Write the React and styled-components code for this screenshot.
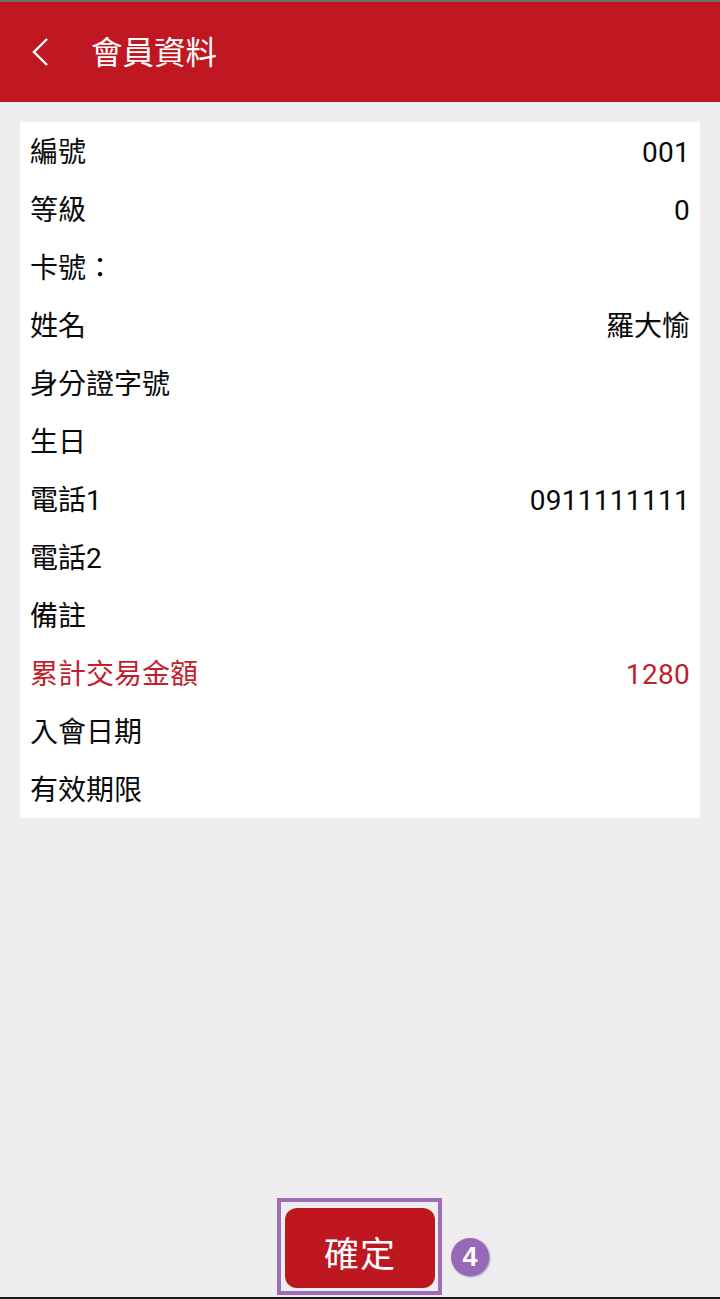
import React from "react";
import styled, { createGlobalStyle } from "styled-components";

const GlobalStyle = createGlobalStyle`
  html, body {
    margin: 0;
    padding: 0;
    background: #eeedf0;
  }
`;

const Page = styled.div`
  display: flex;
  flex-direction: column;
  width: 720px;
  height: 1299px;
  box-sizing: border-box;
  overflow: hidden;
  background: #eeedf0;
  border-top: 2px solid #6f6f6f;
  border-bottom: 2px solid #1c1c1c;
  font-family: Roboto, "Noto Sans CJK TC", sans-serif;
`;

const Header = styled.header`
  display: flex;
  align-items: center;
  flex-shrink: 0;
  height: 100px;
  padding-left: 32px;
  background: #bf1823;
  color: #fff;
`;

const BackIcon = styled.svg`
  width: 16px;
  height: 30px;
  margin-right: 43px;
`;

const Title = styled.h1`
  margin: 0;
  padding-top: 4px;
  font-size: 31.5px;
  font-weight: 400;
  line-height: 32px;
`;

const Card = styled.div`
  margin: 20px 20px 0;
  background: #fff;
`;

const Row = styled.div`
  display: flex;
  justify-content: space-between;
  align-items: center;
  height: 58px;
  padding: 0 10px;
  font-size: 28px;
  color: ${(props) => (props.$accent ? "#c01f2c" : "#0a0a0a")};
`;

const Label = styled.span`
  padding-bottom: 2px;
`;

const Value = styled.span`
  padding-top: ${(props) => (props.$numeric ? "2px" : "0")};
  padding-bottom: ${(props) => (props.$numeric ? "0" : "2px")};
  letter-spacing: ${(props) => (props.$numeric ? "0.3px" : "0")};
`;

const Footer = styled.div`
  display: flex;
  justify-content: center;
  margin-top: auto;
  padding-bottom: 9px;
`;

const ButtonWrap = styled.div`
  position: relative;
`;

const ConfirmButton = styled.button`
  display: block;
  width: 150px;
  height: 80px;
  padding: 6px 0 0;
  border: none;
  border-radius: 12px;
  background: #bf1720;
  color: #fff;
  font-family: inherit;
  font-size: 35px;
  letter-spacing: 1px;
`;

const Highlight = styled.div`
  position: absolute;
  left: -8px;
  top: -10px;
  width: 165px;
  height: 97px;
  box-sizing: border-box;
  border: 4px solid #9c6fb8;
`;

const Badge = styled.div`
  position: absolute;
  left: 166px;
  top: 30px;
  display: flex;
  align-items: center;
  justify-content: center;
  width: 38px;
  height: 38px;
  border-radius: 50%;
  background: #9768b8;
  box-shadow: 1px 1px 2px rgba(60, 40, 80, 0.5);
  color: #fff;
  font-family: "Liberation Sans", sans-serif;
  font-size: 27px;
  font-weight: 700;
`;

const rows = [
  ["編號", "001"],
  ["等級", "0"],
  ["卡號："],
  ["姓名", "羅大愉"],
  ["身分證字號"],
  ["生日"],
  ["電話1", "0911111111"],
  ["電話2"],
  ["備註"],
  ["累計交易金額", "1280", true],
  ["入會日期"],
  ["有效期限"],
];

export default function App() {
  return (
    <Page>
      <GlobalStyle />
      <Header>
        <BackIcon viewBox="0 0 16 30" fill="none">
          <path d="M15 2 L2 15 L15 28" stroke="#fff" strokeWidth="2.4" />
        </BackIcon>
        <Title>會員資料</Title>
      </Header>
      <Card>
        {rows.map(([label, value, accent]) => (
          <Row key={label} $accent={accent}>
            <Label>{label}</Label>
            {value && <Value $numeric={/^\d+$/.test(value)}>{value}</Value>}
          </Row>
        ))}
      </Card>
      <Footer>
        <ButtonWrap>
          <ConfirmButton>確定</ConfirmButton>
          <Highlight />
          <Badge>4</Badge>
        </ButtonWrap>
      </Footer>
    </Page>
  );
}
